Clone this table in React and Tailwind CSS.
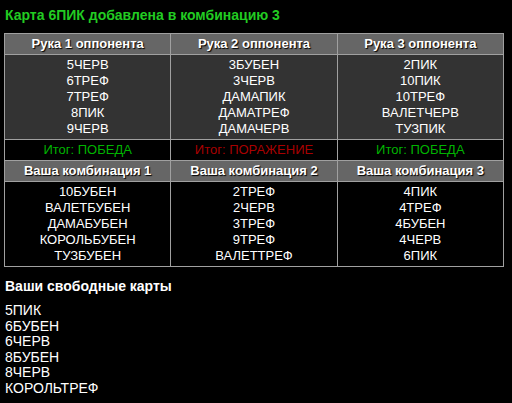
import React from 'react'

const hands = [
  ['5ЧЕРВ', '6ТРЕФ', '7ТРЕФ', '8ПИК', '9ЧЕРВ'],
  ['3БУБЕН', '3ЧЕРВ', 'ДАМАПИК', 'ДАМАТРЕФ', 'ДАМАЧЕРВ'],
  ['2ПИК', '10ПИК', '10ТРЕФ', 'ВАЛЕТЧЕРВ', 'ТУЗПИК'],
]

const results = [
  { text: 'Итог: ПОБЕДА', color: 'text-[#00b400]' },
  { text: 'Итог: ПОРАЖЕНИЕ', color: 'text-[#a80000]' },
  { text: 'Итог: ПОБЕДА', color: 'text-[#00b400]' },
]

const combos = [
  ['10БУБЕН', 'ВАЛЕТБУБЕН', 'ДАМАБУБЕН', 'КОРОЛЬБУБЕН', 'ТУЗБУБЕН'],
  ['2ТРЕФ', '2ЧЕРВ', '3ТРЕФ', '9ТРЕФ', 'ВАЛЕТТРЕФ'],
  ['4ПИК', '4ТРЕФ', '4БУБЕН', '4ЧЕРВ', '6ПИК'],
]

const free = ['5ПИК', '6БУБЕН', '6ЧЕРВ', '8БУБЕН', '8ЧЕРВ', 'КОРОЛЬТРЕФ']

const th = 'border border-[#a0a0a0] bg-[#666666] text-white font-bold text-[13px] leading-[20px] py-0 [text-shadow:1px_1px_1px_#000] w-1/3'
const td = 'border border-[#a0a0a0] text-white text-[13px] leading-[16px] py-[2px] text-center align-top'

export default function App() {
  return (
    <div className="min-h-[403px] bg-black px-1 pt-[7px] font-['Liberation_Sans',Arial,sans-serif]">
      <h3 className="pl-px text-[14px] leading-[16px] font-bold text-[#22cc22]">Карта 6ПИК добавлена в комбинацию 3</h3>

      <table className="mt-[10px] w-[500px] border-collapse border border-[#a0a0a0]">
        <thead>
          <tr>
            <th className={th}>Рука 1 оппонента</th>
            <th className={th}>Рука 2 оппонента</th>
            <th className={th}>Рука 3 оппонента</th>
          </tr>
        </thead>
        <tbody>
          <tr className="bg-[#333333]">
            {hands.map((h, i) => (
              <td key={i} className={td}>
                {h.map((c) => <div key={c}>{c}</div>)}
              </td>
            ))}
          </tr>
          <tr className="bg-black">
            {results.map((r, i) => (
              <td key={i} className={`border border-[#a0a0a0] text-center text-[13px] leading-[16px] py-[2px] ${r.color}`}>{r.text}</td>
            ))}
          </tr>
          <tr>
            <th className={th}>Ваша комбинация 1</th>
            <th className={th}>Ваша комбинация 2</th>
            <th className={th}>Ваша комбинация 3</th>
          </tr>
          <tr className="bg-black">
            {combos.map((h, i) => (
              <td key={i} className={td}>
                {h.map((c) => <div key={c}>{c}</div>)}
              </td>
            ))}
          </tr>
        </tbody>
      </table>

      <h3 className="mt-[11px] pl-px text-[14px] leading-[16px] font-bold text-white">Ваши свободные карты</h3>
      <div className="mt-[9px] pl-px text-[14px] leading-[15.6px] text-white">
        {free.map((c) => <div key={c}>{c}</div>)}
      </div>
    </div>
  )
}
